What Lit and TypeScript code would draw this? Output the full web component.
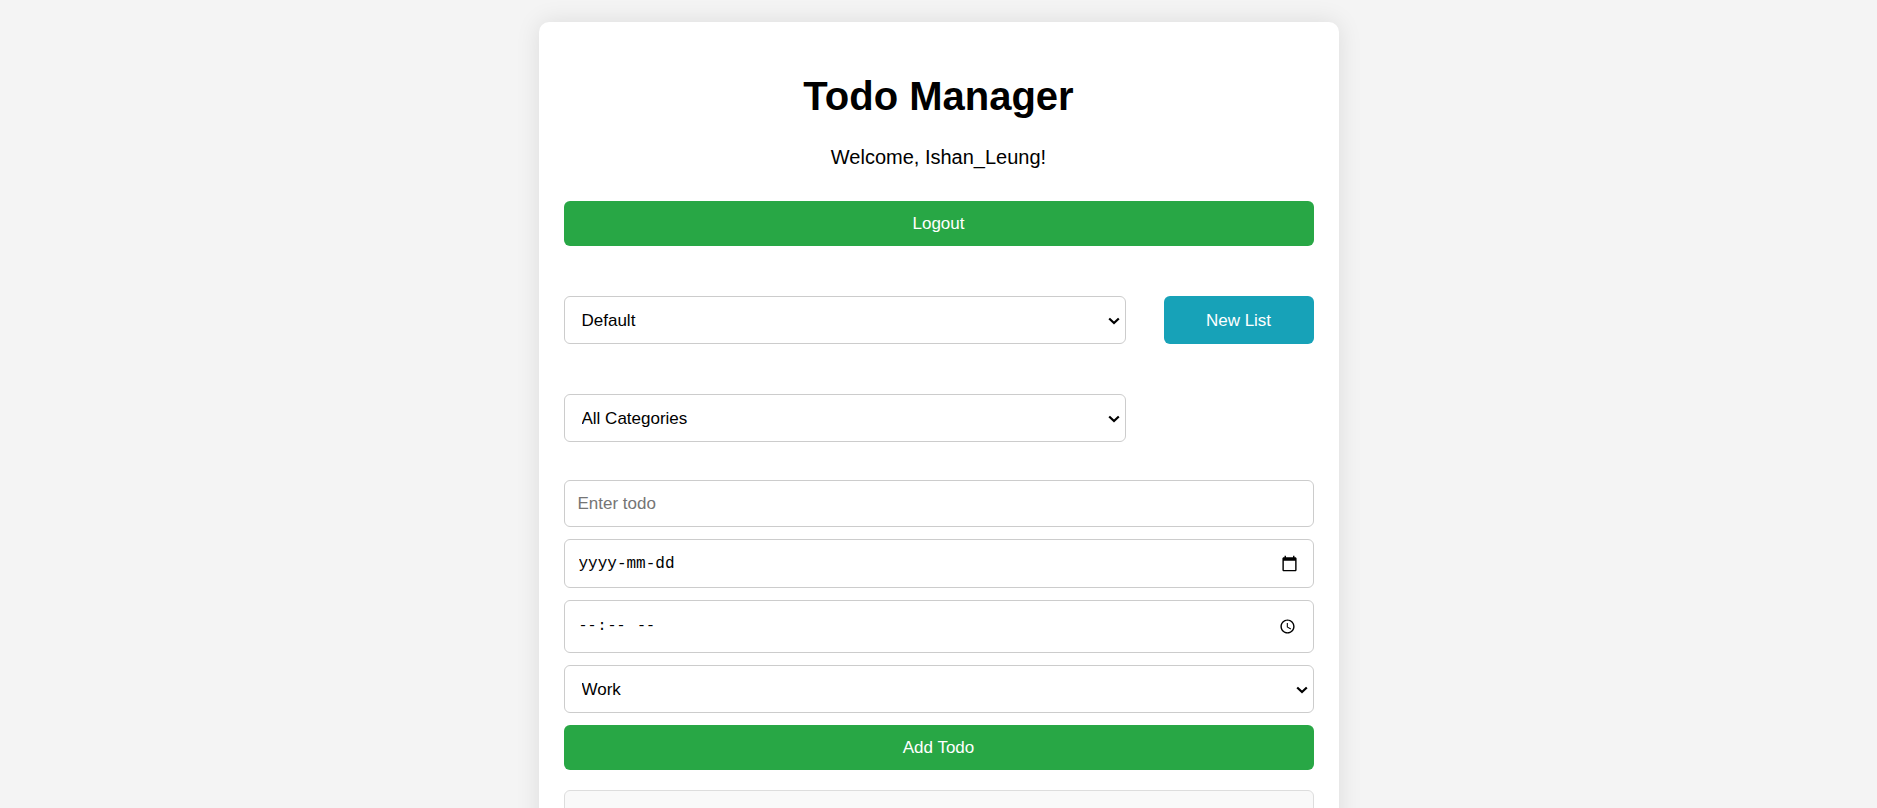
import { LitElement, html, css } from "lit";
import { customElement, state } from "lit/decorators.js";

@customElement("app-root")
export class AppRoot extends LitElement {
  static styles = css`
    :host {
      display: block;
      height: 100vh;
      overflow-y: auto;
      scrollbar-width: none;
      box-sizing: border-box;
      padding: 22px 20px;
      background: #f4f4f4;
      color: #000;
      font-family: Arial, "Liberation Sans", sans-serif;
      font-size: 17px;
    }
    *,
    *::before,
    *::after {
      box-sizing: border-box;
    }
    .card {
      max-width: 800px;
      margin: 0 auto;
      padding: 51px 25px 25px;
      background: #fff;
      border-radius: 10px;
      box-shadow: 0 0 24px rgba(0, 0, 0, 0.1);
    }
    .title {
      margin: 0 0 27px;
      font-size: 40px;
      line-height: 46px;
      text-align: center;
    }
    .welcome {
      margin: 0 0 32px;
      font-size: 20px;
      line-height: 23px;
      text-align: center;
    }
    .btn {
      display: block;
      width: 100%;
      padding: 12px;
      border: 0;
      border-radius: 6px;
      background: #28a745;
      color: #fff;
      font: inherit;
      line-height: 21px;
      cursor: pointer;
    }
    .row {
      display: flex;
      justify-content: space-between;
      margin-top: 50px;
    }
    .row .pick {
      width: 75%;
    }
    .row .btn {
      width: 20%;
      background: #17a2b8;
    }
    .pick {
      display: grid;
      align-items: center;
    }
    .pick > * {
      grid-area: 1 / 1;
    }
    .arrow {
      justify-self: end;
      width: 12px;
      height: 8px;
      margin: 2px 6px 0 0;
      pointer-events: none;
    }
    .field {
      width: 100%;
      min-width: 0;
      height: 48px;
      margin: 0;
      padding: 0 13px;
      border: 1px solid #ccc;
      border-radius: 6px;
      background: #fff;
      color: #000;
      font: inherit;
    }
    select.field {
      appearance: none;
      padding: 0 17px;
    }
    .field::placeholder {
      color: #757575;
    }
    .form {
      display: grid;
      gap: 12px;
      margin: 38px 0 20px;
    }
    .field.todo {
      height: 47px;
    }
    .field.date,
    .field.time {
      font-family: "Liberation Mono", monospace;
    }
    .field.date {
      height: 49px;
      padding: 0 14px;
      font-size: 16px;
    }
    .date::placeholder {
      color: #000;
    }
    .field.time {
      height: 53px;
      padding: 0 14px 0 13px;
      font-size: 15px;
    }
    .time::-webkit-datetime-edit-ampm-field {
      padding-left: 6px;
    }
    .time::-webkit-calendar-picker-indicator {
      width: 17px;
      height: 17px;
    }
    .calendar {
      justify-self: end;
      display: flex;
      margin: 0 16px 1px 0;
      padding: 0;
      border: 0;
      background: none;
      color: #000;
      cursor: pointer;
    }
    .list {
      min-height: 80px;
      margin: 0;
      padding: 12px;
      border: 1px solid #ddd;
      border-radius: 6px;
      background: #f9f9f9;
      list-style: none;
    }
  `;

  @state() private pickingDate = false;

  private arrow() {
    return html`<svg class="arrow" viewBox="0 0 12 8" aria-hidden="true">
      <path d="M1.2 1.5 6 6.1l4.8-4.6" fill="none" stroke="#000" stroke-width="2.2" />
    </svg>`;
  }

  private select(label: string, options: string[]) {
    return html`<div class="pick">
      <select class="field" aria-label=${label}>
        ${options.map((o) => html`<option>${o}</option>`)}
      </select>
      ${this.arrow()}
    </div>`;
  }

  render() {
    return html`
      <main class="card">
        <h1 class="title">Todo Manager</h1>
        <p class="welcome">Welcome, Ishan_Leung!</p>
        <button class="btn" type="button">Logout</button>
        <div class="row">
          ${this.select("List", ["Default"])}
          <button class="btn" type="button">New List</button>
        </div>
        <div class="row">${this.select("Filter by category", ["All Categories"])}</div>
        <form class="form" @submit=${(e: Event) => e.preventDefault()}>
          <input class="field todo" type="text" placeholder="Enter todo" aria-label="Todo" />
          <div class="pick">
            <input
              class="field date"
              type=${this.pickingDate ? "date" : "text"}
              placeholder="yyyy-mm-dd"
              aria-label="Due date"
            />
            ${this.pickingDate
              ? null
              : html`<button
                  class="calendar"
                  type="button"
                  aria-label="Choose a date"
                  @click=${() => (this.pickingDate = true)}
                >
                  <svg width="17" height="17" viewBox="0 0 24 24" aria-hidden="true">
                    <path
                      fill="currentColor"
                      d="M20 3h-1V1h-2v2H7V1H5v2H4c-1.1 0-2 .9-2 2v16c0 1.1.9 2 2 2h16c1.1 0 2-.9 2-2V5c0-1.1-.9-2-2-2zm0 18H4V8h16v13z"
                    />
                  </svg>
                </button>`}
          </div>
          <input class="field time" type="time" aria-label="Due time" />
          ${this.select("Category", ["Work"])}
          <button class="btn" type="submit">Add Todo</button>
        </form>
        <ul class="list"></ul>
      </main>
    `;
  }
}
